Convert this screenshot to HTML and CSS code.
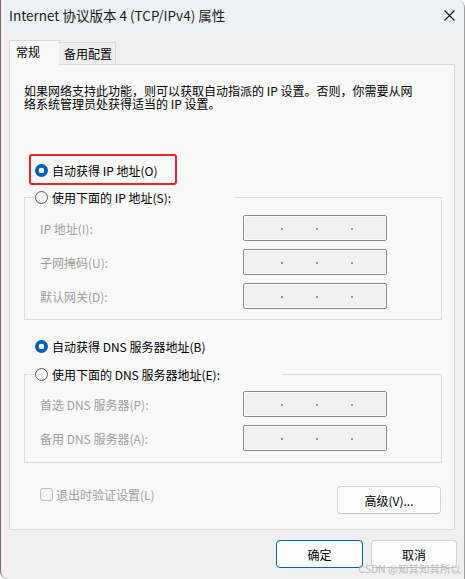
FILE: index.html
```html
<!DOCTYPE html>
<html lang="zh-CN">
<head>
<meta charset="utf-8">
<title>Internet 协议版本 4 (TCP/IPv4) 属性</title>
<link rel="stylesheet" href="styles.css">
</head>
<body>
<div class="window">
  <div class="titlebar">
    <span class="title">Internet 协议版本 4 (TCP/IPv4) 属性</span>
    <svg class="close" width="11" height="11" viewBox="0 0 11 11"><path d="M0.5 0.5 L10.5 10.5 M10.5 0.5 L0.5 10.5" stroke="#1a1a1a" stroke-width="1.1" fill="none"/></svg>
  </div>
  <div class="content">
    <div class="tabs">
      <div class="tab tab-active">常规</div>
      <div class="tab tab-idle">备用配置</div>
    </div>
    <div class="panel">
      <p class="desc"><span class="desc-line">如果网络支持此功能，则可以获取自动指派的 IP 设置。否则，你需要从网</span><span class="desc-line">络系统管理员处获得适当的 IP 设置。</span></p>

      <div class="radio-row highlight"><span class="radio checked"></span><span>自动获得 IP 地址(O)</span></div>

      <fieldset class="group group-ip">
        <legend class="legend legend-ip"><span class="radio"></span><span>使用下面的 IP 地址(S):</span></legend>
        <div class="field"><span class="label">IP 地址(I):</span><div class="ipbox"><i></i><i></i><i></i></div></div>
        <div class="field"><span class="label">子网掩码(U):</span><div class="ipbox"><i></i><i></i><i></i></div></div>
        <div class="field"><span class="label">默认网关(D):</span><div class="ipbox"><i></i><i></i><i></i></div></div>
      </fieldset>

      <div class="radio-row dns-auto"><span class="radio checked"></span><span>自动获得 DNS 服务器地址(B)</span></div>

      <fieldset class="group group-dns">
        <legend class="legend legend-dns"><span class="radio"></span><span>使用下面的 DNS 服务器地址(E):</span></legend>
        <div class="field"><span class="label">首选 DNS 服务器(P):</span><div class="ipbox"><i></i><i></i><i></i></div></div>
        <div class="field"><span class="label">备用 DNS 服务器(A):</span><div class="ipbox"><i></i><i></i><i></i></div></div>
      </fieldset>

      <div class="bottom-row">
        <div class="check-row"><span class="checkbox"></span><span>退出时验证设置(L)</span></div>
        <button class="btn btn-adv">高级(V)...</button>
      </div>
    </div>
  </div>
  <div class="footer">
    <button class="btn btn-ok">确定</button>
    <button class="btn">取消</button>
  </div>
  <div class="watermark">CSDN @知其知其所以</div>
</div>
</body>
</html>
```

FILE: styles.css
```css
* { box-sizing: border-box; }
html, body { margin: 0; padding: 0; background: #ffffff; }
body {
  width: 465px;
  height: 579px;
  overflow: hidden;
  font-family: "Noto Sans CJK SC", "Noto Sans", sans-serif;
  font-size: 12px;
  color: #000;
}
.window {
  position: relative;
  width: 465px;
  height: 579px;
  background: #f0f0f0;
  border-left: 1px solid #7d6466;
  border-right: 1px solid #9c9c9c;
  border-radius: 0 8px 0 8px;
  overflow: hidden;
  display: flex;
  flex-direction: column;
}
.titlebar {
  flex: none;
  height: 31px;
  background: #eef2f6;
  display: flex;
  align-items: center;
  justify-content: space-between;
  padding: 0 9px 0 8px;
}
.title { font-size: 13.5px; color: #1a1a1a; line-height: 1; margin-top: 1px; }
.close { display: block; }

.content { padding: 9px 9px 0 8px; }
.tabs { display: flex; align-items: flex-end; height: 24px; position: relative; z-index: 1; }
.tab {
  border: 1px solid #d9d9d9;
  border-bottom: none;
  line-height: 1;
}
.tab-active {
  width: 51px;
  height: 25px;
  margin-bottom: -1px;
  background: #f9f9f9;
  padding: 5px 0 0 6px;
}
.tab-idle {
  width: 57px;
  height: 22px;
  margin-left: -1px;
  background: #f0f0f0;
  border-left: none;
  padding: 5px 0 0 5px;
}
.panel {
  background: #f9f9f9;
  border: 1px solid #d9d9d9;
  padding: 19px 0 15px;
}
.desc { margin: 0 0 0 14px; }
.desc-line { display: block; height: 13px; line-height: 13px; white-space: nowrap; }

.radio-row {
  display: flex;
  align-items: center;
  gap: 4px;
  height: 20px;
  padding-left: 25px;
}
.highlight { position: relative; margin-top: 50px; }
.highlight::after {
  content: "";
  position: absolute;
  left: 19px;
  top: -6px;
  width: 144px;
  height: 27px;
  border: 2px solid #e8262a;
  border-radius: 3px;
}
.radio {
  flex: none;
  width: 13px;
  height: 13px;
  border-radius: 50%;
  border: 1px solid #606060;
  background: #f3f3f3;
}
.radio.checked {
  border: none;
  background: radial-gradient(circle, #ffffff 0 2.6px, #005fb8 3.1px);
}

.group {
  margin: 7px 12px 0 14px;
  padding: 8px 0 10px;
  border: 1px solid #dcdcdc;
  min-width: 0;
}
.legend {
  display: flex;
  align-items: center;
  gap: 4px;
  height: 20px;
  padding: 0;
  margin-left: 10px;
}
.legend-ip { width: 200px; }
.legend-dns { width: 247px; }
.group-dns { margin-top: 8px; padding: 7px 0 11px; }
.dns-auto { margin-top: 16px; }

.field { display: flex; align-items: center; margin-left: 15px; height: 26px; }
.field + .field { margin-top: 8px; }
.label { width: 203px; color: #a0a0a0; }
.ipbox {
  width: 144px;
  height: 26px;
  background: #f0f0f0;
  border: 1px solid #8a8a8a;
  border-radius: 2px;
  box-shadow: inset 0 0 0 1px #ffffff;
  display: flex;
  align-items: center;
  padding: 2px 0 0 37px;
  gap: 33px;
}
.ipbox i { display: block; width: 2px; height: 2px; background: #8b94a0; }

.bottom-row {
  display: flex;
  justify-content: space-between;
  align-items: flex-start;
  margin: 23px 13px 0 30px;
}
.check-row { display: flex; align-items: center; gap: 3px; color: #a0a0a0; height: 17px; }
.checkbox {
  width: 13px;
  height: 13px;
  border: 1px solid #bdbdbd;
  border-radius: 3px;
  background: #f5f5f5;
}
.btn {
  font-family: inherit;
  font-size: 12px;
  color: #000;
  background: #fdfdfd;
  border: 1px solid #d3d3d3;
  border-bottom-color: #c2c2c2;
  border-radius: 4px;
  padding: 0;
  margin: 0;
}
.btn-adv { width: 104px; height: 28px; }

.footer {
  display: flex;
  justify-content: flex-end;
  gap: 8px;
  padding: 10px 7px 0 0;
}
.footer .btn { width: 86px; height: 28px; }
.footer .btn-ok { width: 87px; border: 1px solid #005fb8; }

.watermark {
  position: absolute;
  right: 3px;
  bottom: 5px;
  font-size: 10.5px;
  color: rgba(175, 175, 175, 0.85);
  line-height: 1;
  white-space: nowrap;
}
```
